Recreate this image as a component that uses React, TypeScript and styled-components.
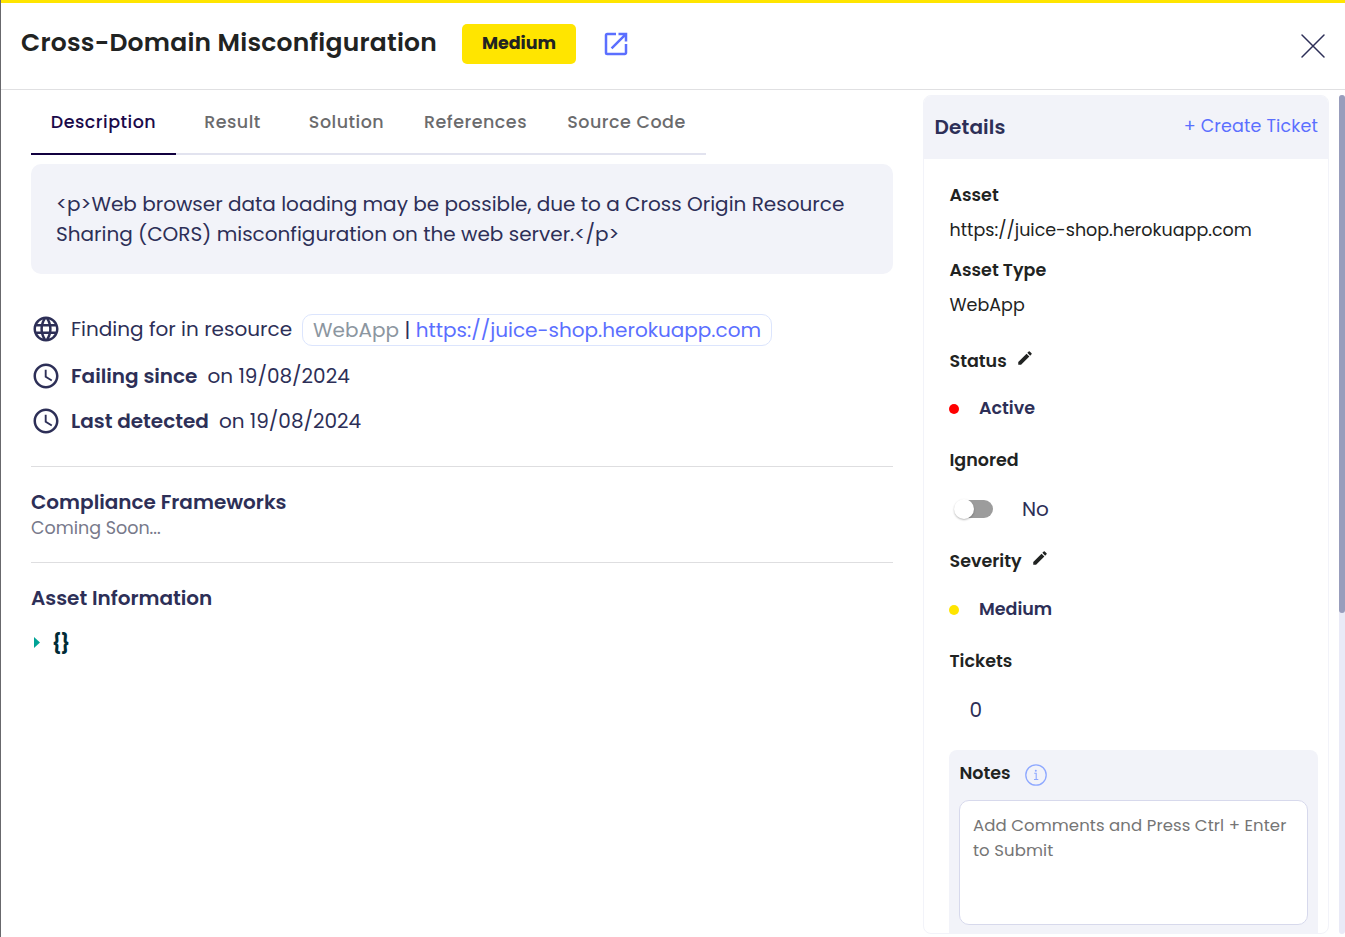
import React from 'react';
import styled, { createGlobalStyle } from 'styled-components';
import { MdOpenInNew, MdEdit, MdAccessTime, MdLanguage } from 'react-icons/md';

const GlobalStyle = createGlobalStyle`
  *, *::before, *::after { box-sizing: border-box; }
  body {
    margin: 0;
    background: #fff;
    color: #2d2f57;
    font-family: Poppins, Inter, sans-serif;
    overflow: hidden;
  }
  h1, h2, h3, p { margin: 0; }
`;

const Drawer = styled.div`
  height: 937px;
  display: flex;
  flex-direction: column;
  border-left: 1px solid #68686c;
  overflow: hidden;
`;

const Header = styled.header`
  flex: none;
  height: 90px;
  display: flex;
  align-items: flex-start;
  padding: 0 19px 0 20px;
  border-top: 3px solid #ffe500;
  border-bottom: 1px solid #e0e0e2;
`;

const Title = styled.h1`
  width: 441px;
  padding-top: 21px;
  color: #212322;
  font-size: 25px;
  font-weight: 600;
  line-height: 38px;
  letter-spacing: 0.23px;
  white-space: nowrap;
`;

const SeverityBadge = styled.span`
  width: 114px;
  height: 40px;
  margin-top: 21px;
  border-radius: 5px;
  background: #ffe500;
  color: #212322;
  font-size: 17.5px;
  font-weight: 700;
  line-height: 38px;
  text-align: center;
`;

const IconButton = styled.button<{ $top: number; $left?: string }>`
  display: flex;
  margin: ${p => p.$top}px 0 0 ${p => p.$left ?? '0'};
  padding: 0;
  border: 0;
  background: none;
  color: #5b6fff;
`;

const Body = styled.div`
  flex: 1;
  min-height: 0;
  display: flex;
  padding: 5px 0 3px 30px;
`;

const Main = styled.main`
  width: 862px;
  margin-right: 30px;
`;

const Tabs = styled.nav`
  width: 675px;
  height: 60px;
  display: flex;
  box-shadow: inset 0 -2px #e2e3ef;
`;

const Tab = styled.button<{ $width: number; $active?: boolean }>`
  width: ${p => p.$width}px;
  padding: 0 0 4px;
  border: 0;
  border-bottom: 2px solid ${p => (p.$active ? '#11003f' : 'transparent')};
  background: none;
  color: ${p => (p.$active ? '#1a0a4a' : '#6b6b6d')};
  font: 500 17.5px/52px Poppins, Inter, sans-serif;
  letter-spacing: 0.5px;
  text-align: center;
  white-space: nowrap;
`;

const DescriptionBox = styled.section`
  height: 110px;
  margin-top: 9px;
  padding: 25px;
  border-radius: 10px;
  background: #f2f3f9;
  font-size: 20px;
  line-height: 30px;
`;

const Facts = styled.section`
  height: 193px;
  padding-top: 32px;
  border-bottom: 1px solid #dedee0;
`;

const Fact = styled.div<{ $height: number }>`
  height: ${p => p.$height}px;
  display: flex;
  align-items: center;
  font-size: 20px;
  white-space: nowrap;

  > svg { flex: none; margin-right: 10px; }
`;

const FactLabel = styled.strong`
  margin-right: 10px;
  font-weight: 600;
`;

const ResourceChip = styled.span`
  height: 32px;
  display: flex;
  gap: 5.4px;
  margin: 2px 0 0 10px;
  padding: 0 10px;
  border: 1px solid #dce5fd;
  border-radius: 10px;
  line-height: 31px;
`;

const ResourceKind = styled.span`
  color: #8c96a0;
`;

const ResourceLink = styled.a`
  color: #5b6fff;
`;

const Section = styled.section<{ $divided?: boolean }>`
  height: 96px;
  padding-top: 20px;
  border-bottom: ${p => (p.$divided ? '1px solid #dedee0' : '0')};
`;

const SectionTitle = styled.h2`
  font-size: 20px;
  font-weight: 600;
  line-height: 30px;
`;

const Muted = styled.p`
  color: #77798a;
  font-size: 17.5px;
  line-height: 22px;
`;

const JsonNode = styled.div`
  display: flex;
  align-items: center;
  height: 30px;
  margin-top: 15px;
  padding-left: 3px;
  color: #002b36;
  font-size: 18.5px;
  font-weight: 700;
  line-height: 26px;
  letter-spacing: -0.6px;

  svg { margin: 0 11px 2px 0; }
`;

const JsonBraces = styled.span`
  padding-top: 1px;
`;

const DetailsPanel = styled.aside`
  width: 406px;
  border: 1px solid #f2f3f9;
  border-radius: 8px;
  overflow: hidden;
`;

const DetailsHeader = styled.div`
  height: 63px;
  display: flex;
  align-items: center;
  justify-content: space-between;
  padding: 0 10px 2px 10.5px;
  background: #f2f3f9;
`;

const DetailsTitle = styled.h2`
  font-size: 20px;
  font-weight: 600;
  letter-spacing: 0.15px;
`;

const CreateTicket = styled.a`
  padding-bottom: 2px;
  color: #5b6fff;
  font-size: 17.5px;
  line-height: 22px;
  letter-spacing: 0.16px;
`;

const DetailsBody = styled.div`
  padding: 18px 10px 0 25px;
`;

const Field = styled.div<{ $height: number }>`
  height: ${p => p.$height}px;
  padding-left: 0.5px;
`;

const FieldLabel = styled.h3`
  display: flex;
  color: #212322;
  font-size: 17.5px;
  font-weight: 600;
  line-height: 36px;

  svg { margin: 6px 0 0 9.5px; }
`;

const FieldValue = styled.p`
  color: #212322;
  font-size: 17.5px;
  line-height: 34px;
`;

const StateValue = styled.p<{ $color: string; $top: number }>`
  display: flex;
  align-items: center;
  margin: ${p => p.$top}px 0 0 -0.5px;
  font-size: 17.5px;
  font-weight: 600;
  line-height: 36px;

  &::before {
    content: '';
    width: 10px;
    height: 10px;
    margin: 2px 20px 0 0;
    border-radius: 50%;
    background: ${p => p.$color};
  }
`;

const SwitchRow = styled.div`
  height: 36px;
  display: flex;
  align-items: center;
  gap: 29px;
  margin-top: 13px;
  padding-left: 4.5px;
  font-size: 20px;
`;

const Switch = styled.span`
  width: 39px;
  height: 18px;
  display: flex;
  align-items: center;
  border-radius: 9px;
  background: linear-gradient(90deg, transparent 5px, #9c9c9c 5px);

  &::before {
    content: '';
    width: 20px;
    height: 20px;
    border-radius: 50%;
    background: #fff;
    box-shadow: 0 1px 2px rgba(0, 0, 0, 0.28);
  }
`;

const TicketCount = styled.p`
  margin-top: 13px;
  padding-left: 20px;
  font-size: 20px;
  line-height: 36px;
`;

const NotesBox = styled.section`
  height: 190px;
  padding: 0 10px;
  border-radius: 8px;
  background: #f2f3f9;
`;

const NotesTitle = styled.h3`
  height: 50px;
  display: flex;
  padding-left: 0.5px;
  color: #212322;
  font-size: 17.5px;
  font-weight: 600;
  line-height: 46px;

  svg { margin: 13px 0 0 13px; }
`;

const NotesInput = styled.textarea`
  display: block;
  width: 349px;
  height: 125px;
  padding: 12px 13px;
  border: 1px solid #d7d9ec;
  border-radius: 10px;
  background: #fff;
  font: 400 16.5px/25px Poppins, Inter, sans-serif;
  letter-spacing: 0.09px;
  resize: none;

  &::placeholder { color: #757575; opacity: 1; }
`;

const ScrollTrack = styled.div`
  width: 6px;
  height: 839px;
  margin-left: auto;
  border-radius: 3px;
  background: #e9eaf7;
`;

const ScrollThumb = styled.div`
  height: 518px;
  border-radius: 3px;
  background: #989dbc;
`;

const tabs = [
  { label: 'Description', width: 145 },
  { label: 'Result', width: 113 },
  { label: 'Solution', width: 115 },
  { label: 'References', width: 143 },
  { label: 'Source Code', width: 159 },
];

const CloseIcon = () => (
  <svg width="26" height="26" viewBox="0 0 26 26" stroke="#2d2f57" strokeWidth="1.5" strokeLinecap="round">
    <path d="M2 2l22 22M24 2L2 24" />
  </svg>
);

const InfoIcon = () => (
  <svg width="24" height="24" viewBox="0 0 24 24" fill="none" stroke="#8ea8ff" strokeWidth="1.3">
    <circle cx="12" cy="12" r="10.2" />
    <path d="M10.2 10.2h2v6.1M10 16.5h4.3" strokeWidth="1.1" />
    <circle cx="11.8" cy="7.8" r="1" fill="#8ea8ff" stroke="none" />
  </svg>
);

export default function App() {
  return (
    <>
      <GlobalStyle />
      <Drawer>
        <Header>
          <Title>Cross-Domain Misconfiguration</Title>
          <SeverityBadge>Medium</SeverityBadge>
          <IconButton $top={26} $left="25px" aria-label="Open in new window"><MdOpenInNew size={30} /></IconButton>
          <IconButton $top={30} $left="auto" aria-label="Close"><CloseIcon /></IconButton>
        </Header>
        <Body>
          <Main>
            <Tabs>
              {tabs.map((t, i) => (
                <Tab key={t.label} $width={t.width} $active={i === 0}>{t.label}</Tab>
              ))}
            </Tabs>
            <DescriptionBox>
              &lt;p&gt;Web browser data loading may be possible, due to a Cross Origin Resource
              Sharing (CORS) misconfiguration on the web server.&lt;/p&gt;
            </DescriptionBox>
            <Facts>
              <Fact $height={46}>
                <MdLanguage size={30} />
                Finding for in resource
                <ResourceChip>
                  <ResourceKind>WebApp</ResourceKind>|<ResourceLink>https://juice-shop.herokuapp.com</ResourceLink>
                </ResourceChip>
              </Fact>
              <Fact $height={48}>
                <MdAccessTime size={30} />
                <FactLabel>Failing since</FactLabel>on 19/08/2024
              </Fact>
              <Fact $height={42}>
                <MdAccessTime size={30} />
                <FactLabel>Last detected</FactLabel>on 19/08/2024
              </Fact>
            </Facts>
            <Section $divided>
              <SectionTitle>Compliance Frameworks</SectionTitle>
              <Muted>Coming Soon...</Muted>
            </Section>
            <Section>
              <SectionTitle>Asset Information</SectionTitle>
              <JsonNode>
                <svg width="7" height="11" viewBox="0 0 7 11" fill="#00a396"><path d="M0 0l6 5.5L0 11z" /></svg>
                <JsonBraces>{'{}'}</JsonBraces>
              </JsonNode>
            </Section>
          </Main>
          <DetailsPanel>
            <DetailsHeader>
              <DetailsTitle>Details</DetailsTitle>
              <CreateTicket>+ Create Ticket</CreateTicket>
            </DetailsHeader>
            <DetailsBody>
              <Field $height={75}>
                <FieldLabel>Asset</FieldLabel>
                <FieldValue>https://juice-shop.herokuapp.com</FieldValue>
              </Field>
              <Field $height={91}>
                <FieldLabel>Asset Type</FieldLabel>
                <FieldValue>WebApp</FieldValue>
              </Field>
              <Field $height={99}>
                <FieldLabel>Status<MdEdit size={18} /></FieldLabel>
                <StateValue $color="#ff0000" $top={11}>Active</StateValue>
              </Field>
              <Field $height={101}>
                <FieldLabel>Ignored</FieldLabel>
                <SwitchRow><Switch />No</SwitchRow>
              </Field>
              <Field $height={100}>
                <FieldLabel>Severity<MdEdit size={18} /></FieldLabel>
                <StateValue $color="#ffe500" $top={12}>Medium</StateValue>
              </Field>
              <Field $height={107}>
                <FieldLabel>Tickets</FieldLabel>
                <TicketCount>0</TicketCount>
              </Field>
              <NotesBox>
                <NotesTitle>Notes<InfoIcon /></NotesTitle>
                <NotesInput placeholder="Add Comments and Press Ctrl + Enter to Submit" />
              </NotesBox>
            </DetailsBody>
          </DetailsPanel>
          <ScrollTrack><ScrollThumb /></ScrollTrack>
        </Body>
      </Drawer>
    </>
  );
}
